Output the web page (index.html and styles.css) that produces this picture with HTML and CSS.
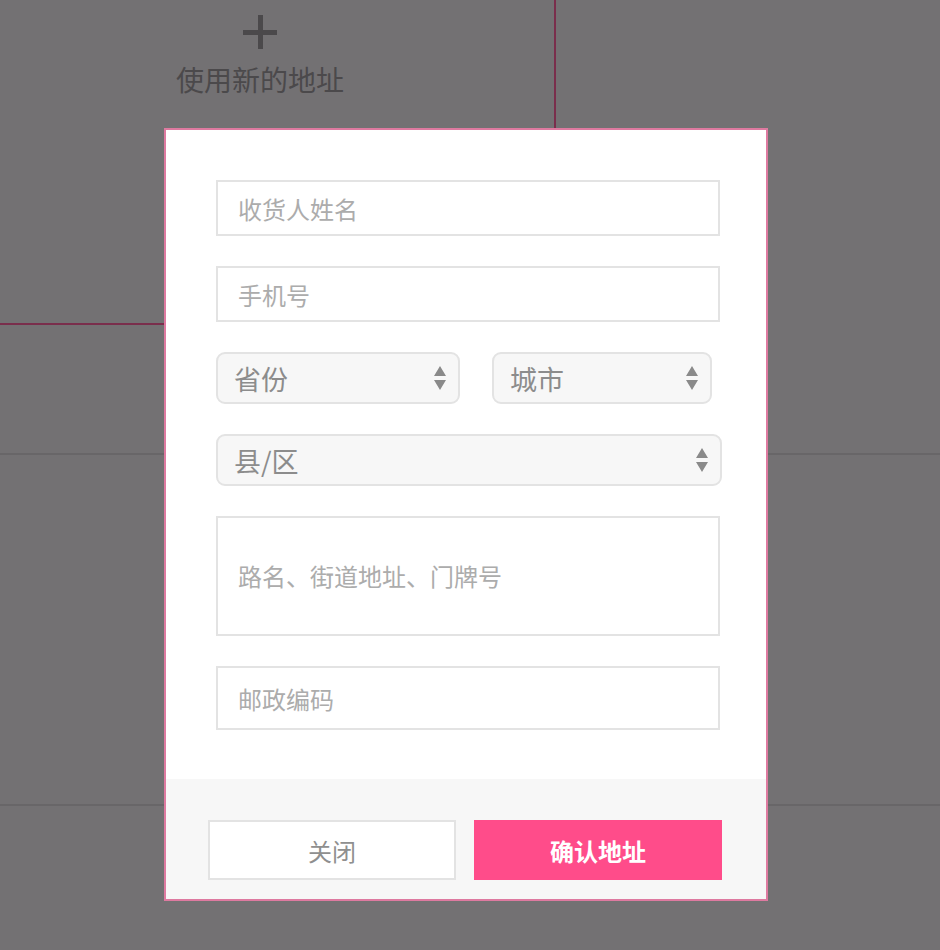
FILE: index.html
```html
<!DOCTYPE html>
<html>
    <head>
        <meta charset="utf-8">
        <link rel="stylesheet" href="styles.css">
    </head>
    <body>
        <div class="page">
            <div class="addr-row first">
                <div class="addr-card selected">
                    <div class="new-address">
                        <span class="plus"></span>
                        <span class="new-text">使用新的地址</span>
                    </div>
                </div>
            </div>
            <div class="addr-row second"></div>
            <div class="addr-row third"></div>
        </div>

        <div class="modal">
            <form class="modal-body">
                <input type="text" class="field" placeholder="收货人姓名">
                <input type="text" class="field" placeholder="手机号">
                <div class="select-row">
                    <div class="select-box province">
                        <select><option>省份</option></select>
                        <svg class="arrows" width="14" height="26" viewBox="0 0 14 26"><path d="M7 1 L13 11 L1 11 Z M1 15 L13 15 L7 25 Z" fill="#8a8a8a"/></svg>
                    </div>
                    <div class="select-box city">
                        <select><option>城市</option></select>
                        <svg class="arrows" width="14" height="26" viewBox="0 0 14 26"><path d="M7 1 L13 11 L1 11 Z M1 15 L13 15 L7 25 Z" fill="#8a8a8a"/></svg>
                    </div>
                </div>
                <div class="select-box county">
                    <select><option>县/区</option></select>
                    <svg class="arrows" width="14" height="26" viewBox="0 0 14 26"><path d="M7 1 L13 11 L1 11 Z M1 15 L13 15 L7 25 Z" fill="#8a8a8a"/></svg>
                </div>
                <textarea class="field street" placeholder="路名、街道地址、门牌号"></textarea>
                <input type="text" class="field postal" placeholder="邮政编码">
            </form>
            <div class="modal-footer">
                <button class="btn btn-close">关闭</button>
                <button class="btn btn-confirm">确认地址</button>
            </div>
        </div>
    </body>
</html>
```

FILE: styles.css
```css
body {
    margin: 0;
    background-color: #737173;
    font-family: "Noto Sans CJK SC", "Noto Sans", sans-serif;
    overflow: hidden;
}
.page {
    width: 940px;
    height: 950px;
}
.addr-row {
    box-sizing: border-box;
}
.addr-row.first {
    height: 325px;
}
.addr-row.second {
    height: 130px;
    border-bottom: 2px solid #686668;
}
.addr-row.third {
    height: 351px;
    border-bottom: 2px solid #686668;
}
.addr-card {
    box-sizing: border-box;
    height: 100%;
}
.addr-card.selected {
    width: 590px;
    margin-left: -34px;
    border-right: 2px solid #7a2e4c;
    border-bottom: 2px solid #7a2e4c;
}
.new-address {
    display: flex;
    flex-direction: column;
    align-items: center;
    padding-top: 15px;
    color: #4b494b;
}
.plus {
    position: relative;
    width: 34px;
    height: 34px;
}
.plus::before,
.plus::after {
    content: "";
    position: absolute;
    background-color: #4b494b;
}
.plus::before {
    left: 15px;
    top: 0;
    width: 5px;
    height: 34px;
}
.plus::after {
    left: 0;
    top: 15px;
    width: 34px;
    height: 5px;
}
.new-text {
    font-size: 28px;
    line-height: 40px;
    margin-top: 10px;
}

.modal {
    position: fixed;
    left: 164px;
    top: 128px;
    width: 604px;
    box-sizing: border-box;
    border: 2px solid #de7aa0;
    background-color: #fff;
}
.modal-body {
    display: flex;
    flex-direction: column;
    gap: 30px;
    padding: 50px 0 49px 50px;
    margin: 0;
}
.field {
    box-sizing: border-box;
    width: 504px;
    height: 56px;
    border: 2px solid #e3e3e3;
    border-radius: 0;
    padding: 0 20px;
    font-family: inherit;
    font-size: 24px;
    color: #555;
    outline: none;
    margin: 0;
}
.field::placeholder {
    color: #acacac;
}
.field.street {
    height: 120px;
    resize: none;
    padding-top: 40px;
    line-height: 36px;
    display: block;
}
.field.postal {
    height: 64px;
}
.select-row {
    display: flex;
    gap: 32px;
}
.select-box {
    position: relative;
    height: 52px;
}
.select-box.province {
    width: 244px;
}
.select-box.city {
    width: 220px;
}
.select-box.county {
    width: 506px;
}
.select-box select {
    appearance: none;
    -webkit-appearance: none;
    box-sizing: border-box;
    width: 100%;
    height: 100%;
    border: 2px solid #e3e3e3;
    border-radius: 9px;
    background-color: #f7f7f7;
    padding: 0 16px;
    font-family: inherit;
    font-size: 27px;
    color: #8c8c8c;
    outline: none;
}
.select-box .arrows {
    position: absolute;
    right: 13px;
    top: 13px;
    pointer-events: none;
}
.modal-footer {
    display: flex;
    gap: 18px;
    background-color: #f7f7f7;
    padding: 41px 0 19px 42px;
}
.btn {
    box-sizing: border-box;
    width: 248px;
    height: 60px;
    font-family: inherit;
    font-size: 24px;
    border-radius: 0;
    cursor: pointer;
}
.btn-close {
    background-color: #fff;
    border: 2px solid #e3e3e3;
    color: #8f8f8f;
}
.btn-confirm {
    background-color: #ff4c8a;
    border: none;
    color: #fff;
    font-weight: bold;
}
```
